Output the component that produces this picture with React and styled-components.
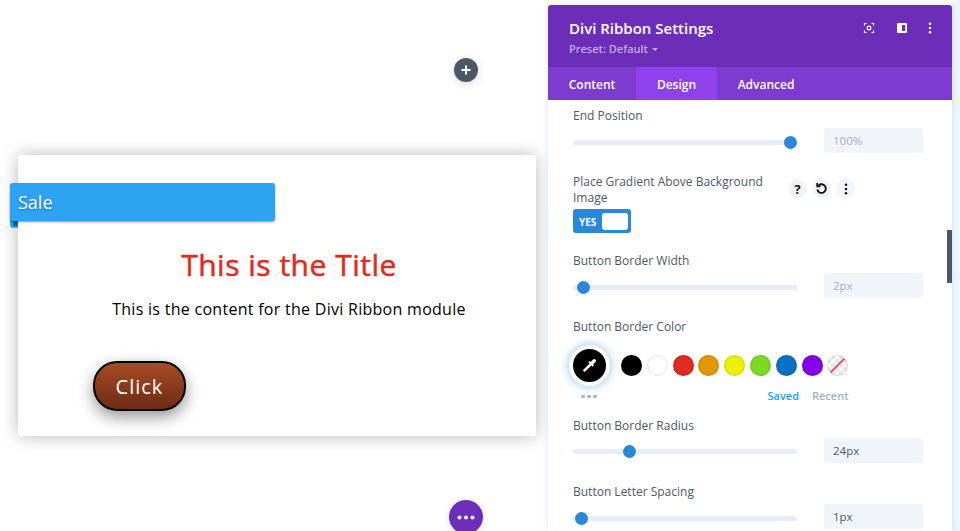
import React from "react";
import styled, { createGlobalStyle } from "styled-components";

const GlobalStyle = createGlobalStyle`
  html, body {
    margin: 0;
    padding: 0;
    height: 531px;
    overflow: hidden;
    background: #fff;
    font-family: "Open Sans", sans-serif;
  }
`;

const swatches = ["#000000", "#ffffff", "#e02b20", "#e09900", "#edf000", "#7cda24", "#0c71c3", "#8300e9"];

const Page = styled.div`
  display: grid;
  grid-template-columns: 548px 404px 8px;
  width: 960px;
  height: 531px;
  overflow: hidden;
`;

const Canvas = styled.div`
  position: relative;
  padding: 155px 12px 0 18px;
`;

const Card = styled.div`
  position: relative;
  height: 281px;
  box-sizing: border-box;
  padding: 94px 0 0 24px;
  background: #fff;
  border-radius: 3px;
  box-shadow: 0 0 18px rgba(0, 0, 0, 0.28);
`;

const Ribbon = styled.div`
  position: absolute;
  left: -8px;
  top: 28px;
  width: 265px;
  height: 38px;
  box-sizing: border-box;
  padding-left: 8px;
  line-height: 38px;
  font-size: 18px;
  color: #fff;
  background: #2ea3f2;
  border-radius: 3px;
  text-shadow: 0 1px 2px rgba(0, 0, 0, 0.3);
  box-shadow: 0 1px 2px rgba(0, 0, 0, 0.45);
`;

const RibbonFold = styled.div`
  position: absolute;
  left: -8px;
  top: 62px;
  width: 8px;
  height: 11px;
  background: #2ea3f2;
  border-radius: 0 0 0 3px;

  &::after {
    content: "";
    position: absolute;
    left: 3px;
    top: 4px;
    width: 5px;
    height: 5px;
    background: #1c5f8e;
    border-radius: 2px 0 0 0;
  }
`;

const CardTitle = styled.h2`
  margin: 0;
  font-size: 30px;
  line-height: 32px;
  font-weight: 400;
  letter-spacing: 0.5px;
  -webkit-text-stroke: 0.5px #e02b20;
  text-align: center;
  color: #e02b20;
`;

const CardText = styled.p`
  margin: 16px 0 0;
  font-size: 16px;
  line-height: 24px;
  letter-spacing: 0.28px;
  text-align: center;
  color: #000;
`;

const ClickButton = styled.button`
  display: block;
  margin: 40px 0 0 51px;
  width: 93px;
  height: 50px;
  box-sizing: border-box;
  padding: 0;
  border: 2px solid #000;
  border-radius: 24px;
  font-family: inherit;
  font-size: 20px;
  letter-spacing: 1px;
  color: #fff;
  background: linear-gradient(180deg, #a64c24, #6e2a13);
  box-shadow: 0 6px 16px rgba(0, 0, 0, 0.42);
`;

const RoundAction = styled.div`
  position: absolute;
  left: ${(p) => p.$left}px;
  top: ${(p) => p.$top}px;
  width: ${(p) => p.$size}px;
  height: ${(p) => p.$size}px;
  display: flex;
  align-items: center;
  justify-content: center;
  border-radius: 50%;
  background: ${(p) => p.$color};
  box-shadow: 0 2px 8px rgba(0, 0, 0, 0.14);
`;

const Panel = styled.div`
  margin-top: 5px;
  height: 526px;
  position: relative;
  overflow: hidden;
  background: #fff;
  border-radius: 3px 3px 0 0;
  box-shadow: 0 0 6px rgba(43, 135, 218, 0.2);
`;

const Header = styled.div`
  height: 62px;
  box-sizing: border-box;
  padding: 13px 16px 0 21px;
  display: flex;
  justify-content: space-between;
  background: #6c2eb9;
`;

const HeaderTitle = styled.div`
  font-size: 15px;
  line-height: 20px;
  font-weight: 600;
  color: #fff;
`;

const Preset = styled.div`
  margin-top: 3px;
  font-size: 11px;
  line-height: 16px;
  font-weight: 600;
  color: rgba(255, 255, 255, 0.6);

  &::after {
    content: "";
    display: inline-block;
    margin-left: 4px;
    vertical-align: 2px;
    border: 3px solid transparent;
    border-top: 3px solid rgba(255, 255, 255, 0.6);
    border-bottom: 0;
  }
`;

const HeaderIcons = styled.div`
  display: flex;
  padding-top: 4px;
`;

const HeaderIcon = styled.div`
  width: 12px;
  height: 12px;
  display: flex;
  margin-left: ${(p) => p.$left || 0}px;
`;

const Tabs = styled.div`
  display: flex;
  height: 33px;
  background: #7d3bcf;
`;

const Tab = styled.div`
  box-sizing: border-box;
  width: ${(p) => p.$width}px;
  text-align: center;
  line-height: 35px;
  font-size: 12px;
  font-weight: 600;
  color: #fff;
  background: ${(p) => (p.$active ? "#8f42ec" : "transparent")};
`;

const Body = styled.div`
  padding: 7px 29px 0 25px;
`;

const Setting = styled.div`
  margin-bottom: ${(p) => p.$gap}px;
`;

const Label = styled.div`
  font-size: 12px;
  line-height: 17px;
  font-weight: 500;
  color: #4c5866;
`;

const LabelRow = styled.div`
  display: flex;
  align-items: flex-start;
`;

const LabelWrap = styled(Label)`
  width: 213px;
  line-height: 16px;
`;

const HelpIcons = styled.div`
  display: flex;
  gap: 5px;
  margin-top: 5px;
  margin-left: 2px;
`;

const HelpIcon = styled.div`
  width: 19px;
  height: 19px;
  display: flex;
  align-items: center;
  justify-content: center;
  border-radius: 50%;
  font-size: 13px;
  font-weight: 700;
  color: #111;
  background: #f1f5f9;
`;

const SliderRow = styled.div`
  display: flex;
  align-items: center;
  justify-content: space-between;
  margin-top: 4px;
`;

const Track = styled.div`
  position: relative;
  width: 224px;
  height: 5px;
  margin-top: 3px;
  border-radius: 3px;
  background: #e6edf7;
`;

const Thumb = styled.div`
  position: absolute;
  top: -4px;
  width: 13px;
  height: 13px;
  border-radius: 50%;
  background: #2b87da;
`;

const ValueBox = styled.div`
  width: 99px;
  height: 25px;
  box-sizing: border-box;
  padding-left: 9px;
  line-height: 25px;
  font-size: 11.5px;
  font-weight: 500;
  border-radius: 3px;
  background: #f1f5f9;
  color: ${(p) => (p.$muted ? "#a3b0c2" : "#4c5866")};
`;

const Toggle = styled.div`
  width: 58px;
  height: 24px;
  box-sizing: border-box;
  margin-top: 3px;
  padding: 4px 3px 3px 6px;
  display: flex;
  align-items: center;
  justify-content: space-between;
  font-size: 10px;
  font-weight: 700;
  color: #fff;
  background: #2b87da;
  border-radius: 3px;
`;

const ToggleKnob = styled.div`
  width: 26px;
  height: 17px;
  background: #fff;
  border-radius: 3px;
`;

const ColorRow = styled.div`
  display: flex;
  align-items: center;
  margin-top: 9.5px;
`;

const Picker = styled.div`
  width: 33px;
  height: 33px;
  margin-left: -4.5px;
  margin-right: 11.5px;
  display: flex;
  align-items: center;
  justify-content: center;
  flex: none;
  border-radius: 50%;
  background: #000;
  border: 4px solid #fff;
  box-shadow: 0 0 8px 1px rgba(43, 135, 218, 0.45);
`;

const Swatches = styled.div`
  display: flex;
  gap: 4.8px;
`;

const Swatch = styled.div`
  width: 21px;
  height: 21px;
  border-radius: 50%;
  background: ${(p) => p.$color};
  box-shadow: inset 0 0 3px rgba(0, 0, 0, 0.2);
`;

const NoColor = styled(Swatch)`
  background: repeating-conic-gradient(#e8e8e8 0 25%, #fff 0 50%) 0 0 / 8px 8px;
`;

const PaletteFooter = styled.div`
  display: flex;
  align-items: center;
  margin-top: 1px;
  height: 17px;
`;

const MoreDots = styled.div`
  display: flex;
  gap: 2.5px;
  margin-left: 8px;
  margin-top: 3px;
`;

const MoreDot = styled.div`
  width: 3.5px;
  height: 3.5px;
  border-radius: 50%;
  background: #a3b3cc;
`;

const PaletteTab = styled.div`
  font-size: 11px;
  font-weight: 600;
  margin-left: ${(p) => p.$left}px;
  color: ${(p) => p.$color};
`;

const ScrollThumb = styled.div`
  position: absolute;
  right: 0;
  top: 225px;
  width: 5px;
  height: 53px;
  background: #4c5866;
`;

const SideStrip = styled.div`
  background: #eef5fd;
`;

const IconFocus = () => (
  <svg width="12" height="12" viewBox="0 0 12 12" fill="none" stroke="#fff" strokeWidth="1.2">
    <path d="M1.500 3.500V1.500h2M8.500 1.500h2v2M10.500 8.500v2h-2M3.500 10.500h-2v-2" />
    <rect x="4.300" y="4.300" width="3.400" height="3.400" rx="0.8" />
  </svg>
);

const IconSplit = () => (
  <svg width="12" height="12" viewBox="0 0 12 12">
    <path fillRule="evenodd" fill="#fff" d="M2 1h8a1 1 0 0 1 1 1v8a1 1 0 0 1-1 1H2a1 1 0 0 1-1-1V2a1 1 0 0 1 1-1zM6 3v6h3.200V3z" />
  </svg>
);

const IconDots = ({ color }) => (
  <svg width="12" height="12" viewBox="0 0 12 12" fill={color}>
    <circle cx="6" cy="1.800" r="1.250" />
    <circle cx="6" cy="6" r="1.250" />
    <circle cx="6" cy="10.200" r="1.250" />
  </svg>
);

const IconUndo = () => (
  <svg width="13" height="13" viewBox="0 0 12 12" fill="none" stroke="#111" strokeWidth="1.700">
    <path d="M3.200 3.200A4 4 0 1 1 2.100 7" />
    <path d="M2 1v3h3" strokeWidth="1.500" />
  </svg>
);

const IconEyedropper = () => (
  <svg width="17" height="17" viewBox="0 0 17 17" fill="none" stroke="#fff">
    <path d="M2.800 14.200L9.500 7.500" strokeWidth="2.600" />
    <path d="M8 4.700L12.300 9" strokeWidth="1.800" />
    <path d="M10.800 6.200L13.300 3.700" strokeWidth="3.400" strokeLinecap="round" />
  </svg>
);

const IconPlus = () => (
  <svg width="10" height="10" viewBox="0 0 10 10" stroke="#fff" strokeWidth="2">
    <path d="M5 .5v9M.5 5h9" />
  </svg>
);

const IconMore = () => (
  <svg width="18" height="5" viewBox="0 0 18 5" fill="#fff">
    <circle cx="2.500" cy="2.500" r="2" />
    <circle cx="9" cy="2.500" r="2" />
    <circle cx="15.500" cy="2.500" r="2" />
  </svg>
);

const SliderSetting = ({ label, value, pos, muted, gap }) => (
  <Setting $gap={gap}>
    <Label>{label}</Label>
    <SliderRow>
      <Track>
        <Thumb style={{ left: pos }} />
      </Track>
      <ValueBox $muted={muted}>{value}</ValueBox>
    </SliderRow>
  </Setting>
);

const App = () => {
  return (
    <Page>
      <GlobalStyle />
      <Canvas>
        <RoundAction $left={454} $top={58} $size={24} $color="#4c5866">
          <IconPlus />
        </RoundAction>
        <Card>
          <RibbonFold />
          <Ribbon>Sale</Ribbon>
          <CardTitle>This is the Title</CardTitle>
          <CardText>This is the content for the Divi Ribbon module</CardText>
          <ClickButton>Click</ClickButton>
        </Card>
        <RoundAction $left={449} $top={500} $size={34} $color="#6c2eb9">
          <IconMore />
        </RoundAction>
      </Canvas>
      <Panel>
        <Header>
          <div>
            <HeaderTitle>Divi Ribbon Settings</HeaderTitle>
            <Preset>Preset: Default</Preset>
          </div>
          <HeaderIcons>
            <HeaderIcon>
              <IconFocus />
            </HeaderIcon>
            <HeaderIcon $left={21}>
              <IconSplit />
            </HeaderIcon>
            <HeaderIcon $left={16}>
              <IconDots color="#fff" />
            </HeaderIcon>
          </HeaderIcons>
        </Header>
        <Tabs>
          <Tab $width={88}>Content</Tab>
          <Tab $width={81} $active>Design</Tab>
          <Tab $width={98}>Advanced</Tab>
        </Tabs>
        <Body>
          <SliderSetting label="End Position" value="100%" pos={211} muted gap={21} />
          <Setting $gap={19}>
            <LabelRow>
              <LabelWrap>Place Gradient Above Background Image</LabelWrap>
              <HelpIcons>
                <HelpIcon>?</HelpIcon>
                <HelpIcon>
                  <IconUndo />
                </HelpIcon>
                <HelpIcon>
                  <IconDots color="#111" />
                </HelpIcon>
              </HelpIcons>
            </LabelRow>
            <Toggle>
              YES
              <ToggleKnob />
            </Toggle>
          </Setting>
          <SliderSetting label="Button Border Width" value="2px" pos={4} muted gap={20} />
          <Setting $gap={13}>
            <Label>Button Border Color</Label>
            <ColorRow>
              <Picker>
                <IconEyedropper />
              </Picker>
              <Swatches>
                {swatches.map((c) => (
                  <Swatch key={c} $color={c} />
                ))}
                <NoColor>
                  <svg width="21" height="21" viewBox="0 0 21 21" stroke="#f0505a" strokeWidth="1.800">
                    <path d="M3.500 17.500l14-14" />
                  </svg>
                </NoColor>
              </Swatches>
            </ColorRow>
            <PaletteFooter>
              <MoreDots>
                <MoreDot />
                <MoreDot />
                <MoreDot />
              </MoreDots>
              <PaletteTab $left={171} $color="#2e9bea">Saved</PaletteTab>
              <PaletteTab $left={13} $color="#a3b0c2">Recent</PaletteTab>
            </PaletteFooter>
          </Setting>
          <SliderSetting label="Button Border Radius" value="24px" pos={50} gap={20.5} />
          <SliderSetting label="Button Letter Spacing" value="1px" pos={2} gap={0} />
        </Body>
        <ScrollThumb />
      </Panel>
      <SideStrip />
    </Page>
  );
};

export default App;
